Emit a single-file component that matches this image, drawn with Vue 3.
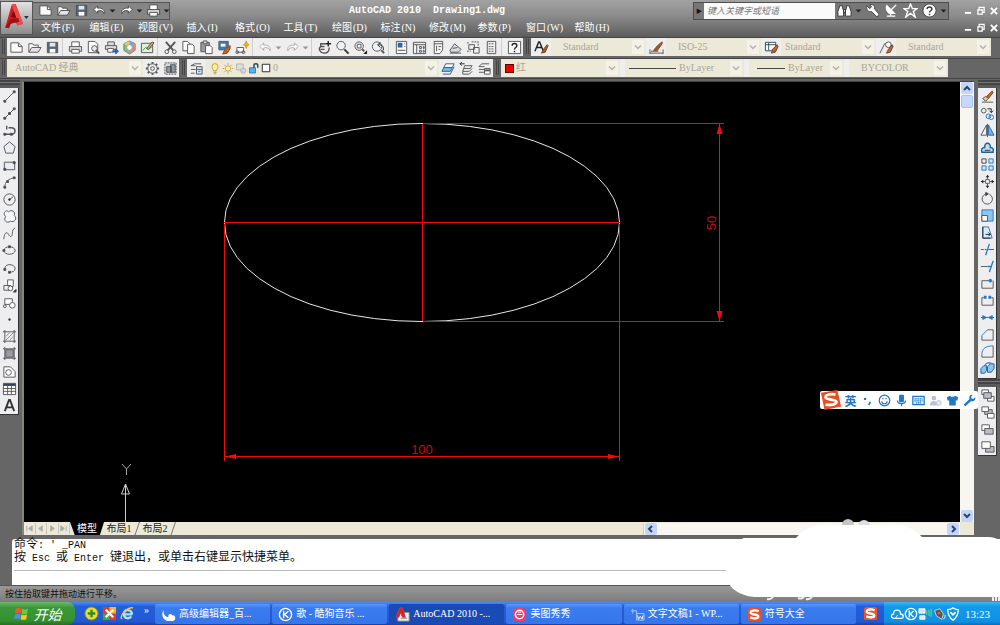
<script setup>
const icons = {
  new: '<path d="M2 3h8l4 4v6H2z" fill="#fafafa"/><path d="M10 3v4h4"/>',
  open: '<path d="M2 13V4h4l1 1.500h5V8" fill="#fff"/><path d="M2 13l3-5h10l-3 5z" fill="#e4e4ec"/>',
  save: '<path d="M2.500 2.500h11v11h-11z" fill="#5a6478"/><path d="M5 3h6v4H5z" fill="#dfe6f2" stroke="none"/><path d="M5 9.500h6v4H5z" fill="#fff" stroke="none"/>',
  print: '<path d="M4 7V2h8v5" fill="#fff"/><path d="M1.500 7h13v5h-13z" fill="#d8d8dc"/><path d="M4 10h8v4H4z" fill="#fff"/>',
  preview: '<path d="M2.500 1.500h7l3 3v9h-10z" fill="#fff"/><circle cx="9" cy="9" r="3" fill="#dfe9f5"/><path d="M11 11l3 3.500" stroke-width="2"/>',
  publish: '<path d="M4 6V2h7v4M1.500 6h12v4h-12z" fill="#ddd"/><path d="M4 9h6v4H4z" fill="#fff"/><path d="M9 12h5M12 9.500l2.500 2.500-2.500 2.500" stroke="#1765b8" stroke-width="2"/>',
  dwf: '<path d="M8 1l6 3v7l-6 4-6-4V4z" fill="#7cc478" stroke="#778"/><path d="M8 1l6 3-6 4z" fill="#6fa8e0" stroke="none"/><path d="M8 1v7L2 4z" fill="#ecca62" stroke="none"/><path d="M14 4v7l-6 4V8z" fill="#d98a76" stroke="none"/><circle cx="8" cy="8" r="3" fill="#fff" stroke="#99a"/>',
  sheet: '<path d="M1.500 3.500h12v10h-12z" fill="#dff0d8"/><path d="M3 11l3-3 3 2 4-3" stroke="#3d8f4a"/><path d="M7 9l6-7 2 1-6 7z" fill="#eba83a"/>',
  cut: '<path d="M3 2l8 9M13 2l-8 9" stroke-width="2"/><circle cx="4" cy="12.500" r="2"/><circle cx="12" cy="12.500" r="2"/>',
  copy: '<path d="M2 1.500h5l2 2v8H2z" fill="#fff"/><path d="M7 4.500h5l2 2v8H7z" fill="#fff"/>',
  paste: '<path d="M2 2.500h9v10H2z" fill="#999"/><path d="M4.500 1h4v3h-4z" fill="#ddd"/><path d="M7 6h5l2 2v6.500H7z" fill="#fff"/>',
  match: '<path d="M2 1.500h10v9H2z" fill="#4379b5"/><path d="M4 4h5v3H4z" fill="#fff" stroke="none"/><path d="M9 9l5-3v3l-3 5-5 1z" fill="#b8692c" stroke="#8a4718"/>',
  block: '<path d="M2 8h7v5H2z" fill="#fff"/><circle cx="2.500" cy="13" r="1.500"/><circle cx="9" cy="13" r="1.500"/><path d="M12 1l1 3 2 1-2 1-1 3-1-3-2-1 2-1z" fill="#f2b01e" stroke="#d8930c"/>',
  undo: '<path d="M6 3L2 7l4 4V8.500c4-1 6 0 7 3 1-4-2-6.500-7-6z" fill="#fff"/>',
  redo: '<path d="M10 3l4 4-4 4V8.500c-4-1-6 0-7 3-1-4 2-6.500 7-6z" fill="#fff"/>',
  arr: '<path d="M5 7h6l-3 3z" fill="currentColor" stroke="none"/>',
  pan: '<path d="M9 4H4v3h4M4 7c-3 2-1 7 4 7 4 0 5-3 5-6M4 10h4" stroke-width="1.500"/><path d="M12 1v6M9 4h6" stroke="#222" stroke-width="1.500"/>',
  zoom: '<circle cx="6.500" cy="6" r="4.500" fill="#eef3f8"/><path d="M10 10l4.500 4.500" stroke="#333" stroke-width="2"/>',
  zoomw: '<circle cx="6.500" cy="6.500" r="4.500" fill="#eef3f8"/><path d="M4.500 4.500h4v4h-4z"/><path d="M10 10l2 2" stroke-width="2"/><path d="M11 15h4v-4z" fill="#222" stroke="none"/>',
  zoomp: '<circle cx="6.500" cy="7" r="5" fill="#eef3f8"/><path d="M11 11l3 3" stroke-width="2"/><path d="M13 11c1-4-1-6-5-6M10 3L7 5l3 3" stroke="#222"/>',
  prop: '<path d="M2.500 1.500h11v13h-11z" fill="#f5f7fa"/><path d="M4 3h5v5H4z" fill="#2c66a8" stroke="none"/><path d="M4 11h8M11 4h1M11 7h1"/>',
  dc: '<path d="M1.500 2.500h13v12h-13z" fill="#eef2f6"/><path d="M1.500 5h13M5 5v9M8 7h2v2H8zM12 7h1v2h-1zM8 11h2v2H8zM12 11h1v2h-1z"/>',
  tp: '<path d="M4.500 1.500h9v9l-3 4h-6z" fill="#f7f7f7"/><path d="M4.500 4h9M7 6v6M9 7h3M9 10h2"/>',
  ssm: '<path d="M2 11l5-7 7 6-3 3H3z" fill="#d6dbe2"/><path d="M5 9l5-1M2 14h12"/>',
  markup: '<path d="M3 5h6v5H3zM8 8h6v6H8z" fill="#eee"/><path d="M1 3h3M6 2h7v4M1 12h4" stroke-dasharray="2 1"/>',
  calc: '<path d="M3.500 1.500h9v13h-9z" fill="#f2f2f2"/><path d="M5 4h6M5 7h6M5 9.500h6M5 12h6" stroke-dasharray="2 1"/>',
  help: '<path d="M1.500 1.500h13v13h-13z" fill="#f5f7fa"/><path d="M5.500 6c0-3 5-3 5 0 0 2-2.500 2-2.500 4M8 11.500v1.500" stroke="#222" stroke-width="1.500"/>',
  astyle: '<path d="M1 12L5 2h1l4 10M3 8h6" stroke="#222" stroke-width="1.500"/><path d="M14 5l-4 5-2 4 4-1 3-7z" fill="#a85c2e" stroke="#7d3e18"/>',
  dstyle: '<path d="M1 14h14M1 10v5M15 10v5M2 12h8"/><path d="M14 2L9 6l-4 5h4l5-7z" fill="#a85c2e" stroke="#7d3e18"/>',
  tstyle: '<path d="M1.500 2.500h11v9h-11zM1.500 5h11M5 3v8" fill="#fff" stroke="#345"/><path d="M14 5l-5 5-1 4 4-1 3-6z" fill="#b8692c" stroke="#7d3e18"/>',
  mstyle: '<path d="M1 14l5-10h4"/><circle cx="10" cy="5" r="3" fill="#fff"/><path d="M14 5l-4 5-2 4 4-1 3-6z" fill="#b8692c" stroke="#7d3e18"/>',
  gear: '<circle cx="8" cy="8" r="5"/><circle cx="8" cy="8" r="2"/><path d="M8 1v2M8 13v2M1 8h2M13 8h2M3 3l1.500 1.500M11.500 11.500L13 13M13 3l-1.500 1.500M4.500 11.500L3 13" stroke-width="2"/>',
  ws: '<path d="M2 2h12v12H2z" stroke-dasharray="2 1" fill="#d5dae2"/><path d="M4 6h5v6H4zM8 4h5v8H8z" fill="#8e98a8"/>',
  layers: '<path d="M2 5l4-2h7M2 9h5M2 13h4M2 5h5" /><path d="M8 6h6v8H8z" fill="#cfe0f0"/><path d="M8 9h6M10 11h2" stroke="#2a6fb5"/>',
  bulb: '<path d="M6 11c0-2-2-3-2-5.500a4 4 0 018 0C12 8 10 9 10 11z" fill="#fff0a0" stroke="#a8892a"/><path d="M6 13h4M7 15h2"/>',
  sun: '<circle cx="8" cy="8" r="3.500" fill="#fff2a0" stroke="#b8902a"/><path d="M8 1v2M8 13v2M1 8h2M13 8h2M3 3l1.500 1.500M11.500 11.500L13 13M13 3l-1.500 1.500M4.500 11.500L3 13" stroke="#a8892a"/>',
  vp: '<path d="M2 2h9v8H2z" fill="#ddd" stroke="#aaa"/><circle cx="11" cy="11" r="3.500" fill="#cdd5dd" stroke="#aaa"/>',
  lock: '<path d="M2 7h8v7H2z" fill="#58b4e8" stroke="#1f6ea8"/><path d="M8 7V4c0-3 5-3 5 0v3" stroke="#2b4a66" stroke-width="2"/>',
  sq: '<path d="M2 2h12v12H2z" fill="#fff" stroke="#222" stroke-width="1.500"/>',
  lcur: '<path d="M5 3h9l-2 4H3z" fill="#fff" stroke="#235f96"/><path d="M3 7h9l-2 4H1z" fill="#7fb9e6" stroke="#235f96"/><path d="M2 14h8l4-8" stroke="#235f96"/>',
  lprev: '<path d="M6 5h8l-2 3H5zM5 8l-1 3h7l3-3M4 11v3h7l3-3"/><path d="M1 3h5M3 1L1 3l2 2" stroke="#222"/>',
  lstate: '<path d="M2 6l3-3h8M2 9h6M2 12h6M2 6h6"/><path d="M8 8h6v6H8z" fill="#fff"/><path d="M8 10h6" stroke-width="2"/>',
  line: '<path d="M3 13L13 3"/><path d="M2 12h2v2H2zM12 2h2v2h-2z" fill="#333"/>',
  xline: '<path d="M2 14L14 2"/><path d="M2 12h2v2H2zM7 7h2v2H7zM12 2h2v2h-2z" fill="#222"/>',
  pline: '<path d="M2 12h9c4-1 4-7-1-7H7M2 12h7M5 3v4" stroke-width="1.500"/><path d="M2 11h2v2H2zM9 11h2v2H9z" fill="#333"/>',
  poly: '<path d="M8 2l6 5-2 7H4L2 7z" fill="#e8edf4"/>',
  rect: '<path d="M2.500 4.500h11v8h-11z" fill="#e8edf4"/><path d="M2 11h2v2H2zM12 4h2v2h-2z" fill="#222"/>',
  arc: '<path d="M3 13c0-6 4-9 10-10"/><path d="M2 12h2v2H2zM5 6h2v2H5zM12 2h2v2h-2z" fill="#333"/>',
  circle: '<circle cx="8" cy="8" r="6"/><path d="M8 8l4-3"/><circle cx="8" cy="8" r="1" fill="#222"/>',
  cloud: '<path d="M4 8C0 5 4 0 7 3c3-3 8 0 6 4 4 3 0 8-4 6-4 3-8-1-5-5z" fill="#f4f6f9"/>',
  spline: '<path d="M2 14c0-6 3-9 5-5s4 2 4-1 1-5 3-6" />',
  ellipse: '<ellipse cx="8" cy="8" rx="6" ry="4"/><path d="M7 3h2v2H7zM1 7h2v2H1z" fill="#333"/>',
  earc: '<path d="M3 8c0-6 11-5 11 0 0 3-3 4-6 4"/><path d="M2 8h2v2H2zM7 11h2v2H7z" fill="#333"/>',
  insert: '<path d="M6 2h6v7H6z" fill="#fff"/><path d="M2 8h7v5H2z" fill="#eee"/><circle cx="9" cy="11" r="2.500" fill="#fff"/><path d="M12 15h3v-3z" fill="#111"/>',
  mkblock: '<path d="M3 4h8v6H3z" fill="#fff"/><circle cx="11" cy="11" r="3" fill="#fff"/><circle cx="3" cy="12" r="1.500"/>',
  point: '<circle cx="8" cy="8" r="1" fill="#444"/>',
  hatch: '<path d="M3 1v14M13 1v14M1 3h14M1 13h14"/><path d="M4 8l4-4M4 12l8-8M8 12l4-4" stroke="#888"/>',
  grad: '<path d="M4 4h8v8H4z" fill="#9a9aa2"/><path d="M3 1v14M13 1v14M1 3h14M1 13h14"/>',
  region: '<path d="M2 14V3h7l5 5v6z" fill="#fff"/><circle cx="7" cy="9" r="3"/>',
  table: '<path d="M1.500 2.500h13v12h-13z" fill="#fff"/><path d="M1.500 4h13" stroke="#345" stroke-width="2.500"/><path d="M1.500 8h13M1.500 11h13M6 4v10M10 4v10"/>',
  text: '<path d="M3 14L7.500 2h1L13 14M4.500 10h7" stroke="#333" stroke-width="2"/>',
  erase: '<path d="M3 10l3 3M2 14h12"/><path d="M3 10l3 3 3-3-3-2z" fill="#f2c9a0"/><path d="M7 8l6-6 1 2-5 6z" fill="#b06a34" stroke="#8a4718"/>',
  cp: '<circle cx="4" cy="5" r="2.500"/><path d="M8 3h4v4M10 5l2 2 2-2" stroke="#222"/><circle cx="9" cy="11" r="2.500" stroke="#2878c8" fill="#d3e8fa"/><circle cx="12" cy="12" r="2.500" stroke="#2878c8"/>',
  mirror: '<path d="M7 2v11H1z" fill="#eee"/><path d="M9 2v11h6z" fill="#6cb2e8" stroke="#2a6fb5"/><path d="M8 1v14"/>',
  offset: '<path d="M2 13h12c1-4-1-5-3-5 1-6-7-6-6 0-3 0-4 2-3 5z" fill="#bcdcf5" stroke="#235f96" stroke-width="1.500"/><path d="M5 11h6" stroke="#333"/>',
  array: '<path d="M2 2h4.500v4.500H2z" stroke="#444"/><path d="M9.500 2H14v4.500H9.500zM2 9.500h4.500V14H2zM9.500 9.500H14V14H9.500z" fill="#cfe5f8" stroke="#2878c8"/>',
  move: '<path d="M8 1v14M1 8h14" stroke-dasharray="5 1 2 1"/><path d="M6 3.500h4L8 1zM6 12.500h4L8 15zM3.500 6v4L1 8zM12.500 6v4L15 8z" fill="#222" stroke="none"/><path d="M6 6h4v4H6z" fill="#fff"/>',
  rotate: '<path d="M10 3.500A5.500 5.500 0 115.500 3.500"/><path d="M6 1.500l3 1.500-3 2z" fill="#222"/>',
  scale: '<path d="M2 2h12v12H2z" fill="#8cc6f0" stroke="#2878c8"/><path d="M2 8h6v6H2z" fill="#fff"/>',
  stretch: '<path d="M3 2h6l4 12H3z" fill="#d8ebfa" stroke="#2878c8"/><path d="M3 2v12h8M6 10h5M9 8l2 2-2 2" stroke="#222"/>',
  trim: '<path d="M1 8h3M5 8h2M9 8h6"/><path d="M6 14l4-12" stroke="#2878c8" stroke-width="1.500"/>',
  extend: '<path d="M1 8h7"/><path d="M8 8h4M10 14l4-12" stroke="#2878c8" stroke-width="1.500"/>',
  break1: '<path d="M14 5v8H2V5h8"/><circle cx="11" cy="5" r="1.500" fill="#2878c8" stroke="#2878c8"/>',
  break2: '<path d="M4 5H2v8h12V5h-2"/><path d="M4 3h3v3H4zM9 3h3v3H9z" fill="#2878c8" stroke="none"/>',
  join: '<path d="M1 8h14"/><path d="M3 6l4 2-4 2zM13 6L9 8l4 2z" fill="#2878c8" stroke="#2878c8"/>',
  chamfer: '<path d="M2 14h12V3M2 14V9"/><path d="M2 9l6-6" stroke="#2878c8"/><path d="M8 3h6"/>',
  fillet: '<path d="M2 14h12V2M2 14v-3"/><path d="M2 11c0-6 4-9 12-9" stroke="#2878c8"/>',
  explode: '<path d="M1 8l3-3h3v5l-2 3H1zM8 6l3-3h4v5l-3 4H8zM5 4l3-2h4" fill="#8cc6f0" stroke="#235f96"/>',
  d1: '<path d="M2 2h7v5H2z" fill="#fff"/><path d="M8 9h7v5H8z" fill="#fff"/><path d="M4 5h8v6H4z" fill="#b9bdca"/>',
  d2: '<path d="M5 5h8v5H5z" fill="#b9bdca"/><path d="M2 2h7v5H2zM8 9h7v5H8z" fill="#fff"/>',
  d3: '<path d="M2 3h8v6H2z" fill="#fff"/><path d="M5 7h9v6H5z" fill="#b9bdca"/>',
  d4: '<path d="M6 8h9v6H6z" fill="#b9bdca"/><path d="M2 3h9v7H2z" fill="#fff"/>',
  bino: '<path d="M3 3h3v3l1 2v6H1V9zM10 3h3l2 6v5H9V8l1-2zM7 7h2v3H7z" fill="#fff" stroke="#333"/>',
  wrench: '<path d="M2 3l3 3 2-2-2-2c4-1 6 1 5 4l5 6-2 3-6-6c-3 1-6-1-5-6z" fill="#fff" stroke="#444"/>',
  dish: '<path d="M3 3l8 8H6C3 9 2 6 3 3zM8 7l5-5M7 11v3M3 14h9" fill="#fff" stroke="#fff" stroke-width="1.500"/>',
  star: '<path d="M8 1l2 5h5l-4 3 2 6-5-4-5 4 2-6-4-3h5z" fill="#777" stroke="#fff" stroke-width="1.500"/>',
  qm: '<circle cx="8" cy="8" r="7" fill="#fff" stroke="#444"/><path d="M5.500 6.500c0-3 5-3 5 0 0 2-2.500 1.500-2.500 3.500M8 11.500v1.500" stroke="#333" stroke-width="1.500"/>',
  min: '<path d="M3 11h10" stroke="#fff" stroke-width="3"/>',
  max: '<path d="M5 5V2h8v8h-3M3 6h7v7H3z" stroke="#fff" stroke-width="2"/>',
  x: '<path d="M3 3l10 10M13 3L3 13" stroke="#fff" stroke-width="3"/>',
  chev: '<path d="M4 6l4 4 4-4" stroke="#b4b2a4" stroke-width="2"/>',
  smile: '<circle cx="8" cy="8" r="6.500" stroke="#1f77c8" stroke-width="1.500"/><path d="M4.500 9c1 4 6 4 7 0M6 5v1.500M10 5v1.500" stroke="#1f77c8" stroke-width="1.500"/>',
  mic: '<path d="M6 2h4v7H6z" fill="#1f77c8" stroke="#1f77c8" stroke-width="2" stroke-linejoin="round"/><path d="M3 8c0 5 10 5 10 0M8 12v3" stroke="#1f77c8" stroke-width="1.500"/>',
  kb: '<path d="M1 3h14v10H1z" stroke="#1f77c8" stroke-width="1.500" fill="#d8eafa"/><path d="M3 6h10M3 8.500h10M5 11h6" stroke="#1f77c8" stroke-width="1.500" stroke-dasharray="1.500 .8"/>',
  person: '<circle cx="6" cy="5" r="3" fill="#bcbfd6" stroke="none"/><path d="M1 14c0-7 10-7 10 0z" fill="#bcbfd6" stroke="none"/><circle cx="12" cy="11" r="3" fill="#e6e7f2" stroke="#bcbfd6"/>',
  shirt: '<path d="M1 4l4-2c1 2 5 2 6 0l4 2-1 4h-2v6H4V8H2z" fill="#1f77c8" stroke="none"/>',
  wr2: '<path d="M1 13l7-7c-1-3 1-6 4-5L10 3.500l.5 2 2 .5L15 4c1 3-2 6-5 4.500L3 15z" fill="#1f77c8" stroke="none"/>',
  comma: '<circle cx="5" cy="6" r="1.500" fill="#1f77c8" stroke="none"/><path d="M11 9.500v1.500l-1.500 2.500" stroke="#1f77c8" stroke-width="2"/>',
  sogou: '<rect x="1" y="1" width="14" height="14" rx="2" fill="#ee4f23" stroke="none"/><path d="M12.500 4.500C9 3 4 3.500 4 6s8 1.500 8 4-5 2.500-8.500 1" stroke="#fff" stroke-width="2.500"/>',
  winflag: '<path d="M2 3c2-1 4-1 6 0L7 8c-2-1-4-1-6 0z" fill="#ee5a2b" stroke="none"/><path d="M9 3c2 1 4 1 6 0l-1 5c-2 1-4 1-6 0z" fill="#7ac143" stroke="none"/><path d="M1 9c2-1 4-1 6 0l-1 5c-2-1-4-1-6 0z" fill="#4a8ff0" stroke="none"/><path d="M8 9c2 1 4 1 6 0l-1 5c-2 1-4 1-6 0z" fill="#fcc827" stroke="none"/>',
  q360: '<circle cx="8" cy="8" r="7" fill="#f5d923" stroke="#5b9c22"/><path d="M8 4v8M4 8h8" stroke="#2f8a2a" stroke-width="2.500"/>',
  qpic: '<path d="M1 1h14v14H1z" fill="#e33b2a" stroke="none"/><path d="M1 8h7v7H1z" fill="#3fa845" stroke="none"/><path d="M8 1h7v7H8z" fill="#f3b52c" stroke="none"/><path d="M4 4l8 8M12 4l-8 8" stroke="#fff" stroke-width="2.500"/>',
  ie: '<path d="M13 9H4c1 5 6 5 8 2M4 8c1-5 8-5 9 1" stroke="#a9e0ff" stroke-width="2.500"/><path d="M2 14C-1 10 8 1 14 2" stroke="#f3c640" stroke-width="1.500"/>',
  cld: '<path d="M3 3c-4 6 0 12 6 12h4c4-2 2-7-1-6-2-3-5-1-4 2-3 0-6-3-5-8z" fill="#fff" stroke="none"/>',
  kugou: '<circle cx="8" cy="8" r="6.500" stroke="#fff" stroke-width="1.500"/><path d="M6 4v8M11 4.500L7 8l4 3.500" stroke="#fff" stroke-width="1.500"/>',
  cad: '<path d="M3 6h12v9H3z" fill="#eee" stroke="#999"/><path d="M1 11L5 1h3l3 10H8L6 6l-2 5z" fill="#d62020" stroke="#c04040"/><path d="M6 12h7" stroke="#888"/>',
  meitu: '<rect x="1" y="1" width="14" height="14" rx="4" fill="#f0386b" stroke="none"/><circle cx="8" cy="8" r="4.500" stroke="#fff" stroke-width="1.500"/><path d="M5 8h6M6 5.500h4" stroke="#fff"/>',
  wps: '<path d="M1 4h6v4M3 2v5M7 7h8v7H7z" stroke="#a9c9ff"/><path d="M8 9l1 4 2-3 2 3 1-4" stroke="#fff"/>',
  tcloud: '<path d="M4 13C0 12 2 8 4 8c0-6 8-6 8 0 4 0 4 5 1 5z" stroke="#fff" stroke-width="1.500"/><path d="M6 13l3-4" stroke="#fff"/>',
  net: '<path d="M1 2h7v5H1zM2 10h6v4H2z" fill="#d9e6f2" stroke="#fff"/><path d="M10 4v5M12.500 3v7M15 2v9" stroke="#6cf06c"/>',
  spk: '<path d="M3 4l6-2 4 6-2 6-6-4z" fill="#555" stroke="#ddd"/><circle cx="8" cy="7" r="2" fill="#d86a4a"/><path d="M13 14c2-2 2-3 2-5" stroke="#fff"/>',
  shield: '<path d="M2 3c4 0 4-1 6-2 2 1 2 2 6 2 0 6-2 9-6 12-4-3-6-6-6-12z" stroke="#fff" stroke-width="1.500"/><path d="M5 6l3 3 3-3" stroke="#fff" stroke-width="2"/>'
}

const segments = 52
const outline = Array.from({ length: segments }, (_, i) => {
  const a = (i / segments) * Math.PI * 2
  return `${(422 + 197.5 * Math.cos(a)).toFixed(1)},${(222.5 + 99 * Math.sin(a)).toFixed(1)}`
}).join(' ')

const quick = ['new', 'open', 'save', 'undo', 'arr', 'redo', 'arr', 'print', 'arr']
const menus = [['文件', 'F'], ['编辑', 'E'], ['视图', 'V'], ['插入', 'I'], ['格式', 'O'], ['工具', 'T'], ['绘图', 'D'], ['标注', 'N'], ['修改', 'M'], ['参数', 'P'], ['窗口', 'W'], ['帮助', 'H']]
const standard = [
  ['new', 'open', 'save'],
  ['print', 'preview', 'publish', 'dwf', 'sheet'],
  ['cut', 'copy', 'paste', 'match', 'block'],
  ['undo', 'arr', 'redo', 'arr'],
  ['pan', 'zoom', 'zoomw', 'zoomp'],
  ['prop', 'dc', 'tp', 'ssm', 'markup', 'calc'],
  ['help']
]
const styles = [
  { icon: 'astyle', value: 'Standard', label: '文字样式', pad: true },
  { icon: 'dstyle', value: 'ISO-25', label: '标注样式', pad: true },
  { icon: 'tstyle', value: 'Standard', label: '表格样式', pad: false },
  { icon: 'mstyle', value: 'Standard', label: '多重引线样式', pad: true }
]
const draw = ['line', 'xline', 'pline', 'poly', 'rect', 'arc', 'circle', 'cloud', 'spline', 'ellipse', 'earc', 'insert', 'mkblock', 'point', 'hatch', 'grad', 'region', 'table', 'text']
const modify = ['erase', 'cp', 'mirror', 'offset', 'array', 'move', 'rotate', 'scale', 'stretch', 'trim', 'extend', 'break1', 'break2', 'join', 'chamfer', 'fillet', 'explode']
const order = ['d1', 'd2', 'd3', 'd4']
const ime = ['comma', 'smile', 'mic', 'kb', 'person', 'shirt', 'wr2']
const tasks = [
  { icon: 'cld', text: '高级编辑器_百...' },
  { icon: 'kugou', text: '歌 - 酷狗音乐 ...' },
  { icon: 'cad', text: 'AutoCAD 2010 -...', on: true },
  { icon: 'meitu', text: '美图秀秀' },
  { icon: 'wps', text: '文字文稿1 - WP...' },
  { icon: 'sogou', text: '符号大全' }
]
</script>

<template>
  <div class="app">
    <header class="head">
      <button class="logo" aria-label="应用程序菜单">
        <svg viewBox="0 0 32 34">
          <path d="M4 27L11 3l4-1 8 21-6 2-2-4-6 1-1 5z" fill="#d31820" />
          <path d="M11 3l4-1 8 21-6 2z" fill="#f04a48" />
          <path d="M10 16l3-7 3 8z" fill="#7d0c12" />
          <path d="M4 27l6-9 8-1 1 4-9 2-2 5z" fill="#9e1118" />
          <path d="M24 15h5l-2.500 3z" fill="#234" />
        </svg>
      </button>
      <div class="headmain">
        <div class="titlerow">
          <div class="quick">
            <button v-for="(n, i) in quick" :key="i" :class="{ small: n === 'arr' }" :aria-label="n">
              <svg class="ic" viewBox="0 0 16 16" v-html="icons[n]"></svg>
            </button>
          </div>
          <h1>AutoCAD 2010&nbsp; Drawing1.dwg</h1>
          <div class="search">
            <span class="tri">▶</span>
            <input type="text" placeholder="键入关键字或短语" aria-label="搜索">
            <button v-for="(n, i) in ['bino', 'arr', 'wrench', 'dish', 'star', 'qm', 'arr']" :key="i" :class="{ small: n === 'arr' }" :aria-label="n">
              <svg class="ic" viewBox="0 0 16 16" v-html="icons[n]"></svg>
            </button>
          </div>
          <div class="winbtns">
            <button v-for="n in ['min', 'max', 'x']" :key="n" :aria-label="n"><svg class="ic" viewBox="0 0 16 16" v-html="icons[n]"></svg></button>
          </div>
        </div>
        <div class="menurow">
          <nav class="menus">
            <button v-for="m in menus" :key="m[1]">{{ m[0] }}<span>({{ m[1] }})</span></button>
          </nav>
          <div class="winbtns">
            <button v-for="n in ['min', 'max', 'x']" :key="n" :aria-label="n"><svg class="ic" viewBox="0 0 16 16" v-html="icons[n]"></svg></button>
          </div>
        </div>
      </div>
    </header>

    <div class="toolrow">
      <i class="grip"></i>
      <div class="bar">
        <div v-for="(g, i) in standard" :key="i" class="group">
          <button v-for="(n, j) in g" :key="j" :class="{ small: n === 'arr', dim: i === 3 }" :aria-label="n">
            <svg class="ic" viewBox="0 0 16 16" v-html="icons[n]"></svg>
          </button>
        </div>
      </div>
      <i class="grip"></i>
      <div class="bar stylebar">
        <div v-for="(s, i) in styles" :key="i" class="styleitem">
          <button :aria-label="s.label"><svg class="ic" viewBox="0 0 16 16" v-html="icons[s.icon]"></svg></button>
          <div class="combo" :class="{ pad: s.pad }">
            <select :aria-label="s.label"><option>{{ s.value }}</option></select>
            <svg class="chev" viewBox="0 0 16 16" v-html="icons.chev"></svg>
          </div>
        </div>
      </div>
    </div>

    <div class="toolrow">
      <i class="grip"></i>
      <div class="bar workbar">
        <div class="combo near">
          <select aria-label="工作空间"><option>AutoCAD 经典</option></select>
          <svg class="chev" viewBox="0 0 16 16" v-html="icons.chev"></svg>
        </div>
        <button aria-label="工作空间设置"><svg class="ic" viewBox="0 0 16 16" v-html="icons.gear"></svg></button>
        <button aria-label="我的工作空间"><svg class="ic" viewBox="0 0 16 16" v-html="icons.ws"></svg></button>
      </div>
      <i class="grip"></i>
      <div class="bar layerbar">
        <button aria-label="图层特性"><svg class="ic" viewBox="0 0 16 16" v-html="icons.layers"></svg></button>
        <div class="combo">
          <svg v-for="n in ['bulb', 'sun', 'vp', 'lock']" :key="n" class="lead" viewBox="0 0 16 16" v-html="icons[n]"></svg>
          <svg class="lead sq" viewBox="0 0 16 16" v-html="icons.sq"></svg>
          <select aria-label="图层"><option>0</option></select>
          <svg class="chev" viewBox="0 0 16 16" v-html="icons.chev"></svg>
        </div>
        <button v-for="n in ['lcur', 'lprev', 'lstate']" :key="n" :aria-label="n"><svg class="ic" viewBox="0 0 16 16" v-html="icons[n]"></svg></button>
      </div>
      <i class="grip"></i>
      <div class="bar propbar">
        <div class="combo wide">
          <i class="swatch"></i>
          <select aria-label="颜色"><option>红</option></select>
          <svg class="chev" viewBox="0 0 16 16" v-html="icons.chev"></svg>
        </div>
        <div class="combo wide">
          <i class="rule long"></i>
          <select aria-label="线型"><option>ByLayer</option></select>
          <svg class="chev" viewBox="0 0 16 16" v-html="icons.chev"></svg>
        </div>
        <div class="combo near">
          <i class="rule"></i>
          <select aria-label="线宽"><option>ByLayer</option></select>
          <svg class="chev" viewBox="0 0 16 16" v-html="icons.chev"></svg>
        </div>
        <div class="combo pad">
          <select aria-label="打印样式"><option>BYCOLOR</option></select>
          <svg class="chev" viewBox="0 0 16 16" v-html="icons.chev"></svg>
        </div>
      </div>
    </div>

    <main class="work">
      <aside class="side left">
        <i class="cap"></i>
        <div class="tools spread">
          <button v-for="n in draw" :key="n" :aria-label="n"><svg class="ic" viewBox="0 0 16 16" v-html="icons[n]"></svg></button>
        </div>
      </aside>

      <section class="view">
        <svg class="canvas">
          <g transform="translate(-24 -82)" fill="none">
            <polygon :points="outline" stroke="#e8e8e8" />
            <g fill="#f00c0c">
              <rect x="224" y="222" width="396" height="1" />
              <rect x="422" y="124" width="1" height="197" />
              <rect x="423" y="123" width="301" height="1" />
              <rect x="423" y="321" width="301" height="1" />
              <rect x="719" y="124" width="1" height="197" />
              <rect x="224" y="224" width="1" height="237" />
              <rect x="619" y="224" width="1" height="237" />
              <rect x="225" y="456" width="395" height="1" />
              <path d="M225 456.500l11-2.500v5zM619 456.500l-11-2.500v5zM719.500 124l-3 10h6zM719.500 321l-3-10h6z" />
            </g>
            <text x="422" y="454" text-anchor="middle" class="measure">100</text>
            <text transform="translate(716 223) rotate(-90)" text-anchor="middle" class="measure">50</text>
            <path d="M122 464l4.500 5 4.500-5M126.500 469v6" stroke="#aaa" />
            <path d="M125.500 484l-4 10h8zM125.500 484v38" stroke="#ccc" />
          </g>
        </svg>
        <div class="vscroll">
          <button aria-label="向上"><svg viewBox="0 0 12 12"><path d="M3 8l3-3 3 3" /></svg></button>
          <i class="thumb"></i>
          <span></span>
          <button aria-label="向下"><svg viewBox="0 0 12 12"><path d="M3 4l3 3 3-3" /></svg></button>
        </div>
        <div class="tabs">
          <div class="nav">
            <button aria-label="第一个"><svg viewBox="0 0 10 10"><path d="M2 2v6M8 2L4 5l4 3z" /></svg></button>
            <button aria-label="上一个"><svg viewBox="0 0 10 10"><path d="M7 2L3 5l4 3z" /></svg></button>
            <button aria-label="下一个"><svg viewBox="0 0 10 10"><path d="M3 2l4 3-4 3z" /></svg></button>
            <button aria-label="最后一个"><svg viewBox="0 0 10 10"><path d="M8 2v6M2 2l4 3-4 3z" /></svg></button>
          </div>
          <button class="tab on">模型</button>
          <button class="tab">布局1</button>
          <svg class="slash" viewBox="0 0 6 13"><path d="M5.500 0L1 13" /></svg>
          <button class="tab">布局2</button>
          <svg class="slash" viewBox="0 0 6 13"><path d="M5.500 0L1 13" /></svg>
          <div class="hscroll">
            <button aria-label="向左"><svg viewBox="0 0 12 12"><path d="M7 3L4 6l3 3" /></svg></button>
            <span></span>
            <button aria-label="向右"><svg viewBox="0 0 12 12"><path d="M5 3l3 3-3 3" /></svg></button>
          </div>
        </div>
        <i class="corner"></i>
      </section>

      <aside class="side right">
        <i class="cap"></i>
        <div class="tools">
          <button v-for="n in modify" :key="n" :aria-label="n"><svg class="ic" viewBox="0 0 16 16" v-html="icons[n]"></svg></button>
        </div>
        <i class="cap"></i>
        <div class="tools">
          <button v-for="n in order" :key="n" :aria-label="n"><svg class="ic" viewBox="0 0 16 16" v-html="icons[n]"></svg></button>
        </div>
      </aside>
    </main>

    <section class="command">
      <div class="log">
        <p>命令<span>: ' _PAN</span></p>
        <p>按<span> Esc </span>或<span> Enter </span>键退出，或单击右键显示快捷菜单。</p>
      </div>
      <input type="text" aria-label="命令行">
    </section>

    <div class="status">按住拾取键并拖动进行平移。</div>

    <footer class="taskbar">
      <button class="start"><svg viewBox="0 0 16 16" v-html="icons.winflag"></svg>开始</button>
      <div class="launch">
        <button v-for="n in ['q360', 'qpic', 'ie']" :key="n" :aria-label="n"><svg class="ic" viewBox="0 0 16 16" v-html="icons[n]"></svg></button>
        <span>»</span>
      </div>
      <div class="tasks">
        <button v-for="t in tasks" :key="t.text" :class="{ on: t.on }">
          <svg class="ic" viewBox="0 0 16 16" v-html="icons[t.icon]"></svg>{{ t.text }}
        </button>
      </div>
      <button class="lang" aria-label="输入法"><svg class="ic" viewBox="0 0 16 16" v-html="icons.sogou"></svg></button>
      <div class="tray">
        <svg v-for="n in ['tcloud', 'kugou', 'net', 'spk', 'shield']" :key="n" class="ic" viewBox="0 0 16 16" v-html="icons[n]"></svg>
        <time>13:23</time>
      </div>
    </footer>

    <svg class="blob" viewBox="0 0 274 82" width="274" height="82">
      <circle cx="122" cy="6" r="6" fill="#c4c4c4" />
      <circle cx="138" cy="7" r="6" fill="#dedede" />
      <path d="M0 55C0 38 4 24 18 19H70C76 12 84 6 96 6H170C182 6 190 12 196 18H262Q270 18 274 22V78H28C10 76 0 66 0 55z" fill="#fff" />
      <path d="M41 80q5 1 7-4M72 79q5 2 7-3M80 80q5 1 7-4M267 77v5M270 78v4M273 78v4" fill="none" stroke="#eee" stroke-width="2" />
    </svg>

    <div class="ime">
      <svg class="imelogo" viewBox="0 0 24 24">
        <path d="M1 4l18-3 4 18-18 4z" fill="#e84e1f" />
        <path d="M17 6C12 5 6 6 6 9s12 2 12 5-7 4-12 3" fill="none" stroke="#fff" stroke-width="3" />
      </svg>
      <button class="en">英</button>
      <button v-for="n in ime" :key="n" :aria-label="n"><svg class="ic" viewBox="0 0 16 16" v-html="icons[n]"></svg></button>
    </div>
  </div>
</template>

<style>
html, body { background: #666; }
</style>

<style scoped>
.app {
  position: relative;
  display: flex;
  flex-direction: column;
  min-height: 100vh;
  overflow: hidden;
  background: #666;
  font-family: "Liberation Serif", "Noto Sans CJK SC", serif;
  font-size: 10px;
  line-height: 14px;
}
button { padding: 0; border: 0; background: none; font: inherit; color: inherit; display: flex; align-items: center; justify-content: center; flex: none; }
input, select { border: 0; padding: 0; margin: 0; background: none; font: inherit; min-width: 0; outline: 0; border-radius: 0; }
select { appearance: none; color: #aaa694; flex: 1; height: 16px; }
p, h1 { margin: 0; }
.ic { width: 15px; height: 15px; fill: none; stroke: #555; flex: none; }

.head { display: flex; height: 37px; background: linear-gradient(#a2a2a2, #8a8a8a 45%, #5c5c5c); color: #fff; }
.logo { width: 31px; height: 32px; margin: 2px 0 0 1px; background: linear-gradient(#e2e2e2, #8c8c8c); box-shadow: 0 0 0 1px #555; }
.logo svg { width: 31px; height: 32px; }
.headmain { flex: 1; display: flex; flex-direction: column; min-width: 0; }
.titlerow { display: flex; align-items: center; height: 20px; padding-top: 1px; box-sizing: border-box; }
.quick { display: flex; align-items: center; height: 18px; width: 138px; padding-left: 3px; box-sizing: border-box; background: #858585; border: 1px solid #555; flex: none; }
.quick button { width: 18px; }
.quick button.small, .search button.small { width: 9px; color: #222; }
.quick .ic { stroke: #4c4c4c; }
h1 { flex: 1; padding-left: 179px; font: bold 10px/18px "Liberation Mono", monospace; white-space: nowrap; }
.search { display: flex; align-items: center; height: 18px; width: 256px; background: #777; border: 1px solid #4e4e4e; box-sizing: border-box; flex: none; }
.search .tri { width: 10px; color: #111; font-size: 6px; text-align: center; }
.search input { flex: 1; height: 16px; padding-left: 3px; background: #fafafa; font-style: italic; font-size: 9px; }
.search input::placeholder { color: #777; opacity: 1; }
.search button { width: 19px; }
.winbtns { display: flex; gap: 3px; width: 37px; flex: none; margin-left: 14px; }
.winbtns .ic { width: 10px; height: 10px; }
.menurow { display: flex; align-items: center; justify-content: space-between; height: 16px; }
.menus { display: flex; width: 582px; padding-left: 9px; }
.menus button { flex: 1; justify-content: flex-start; white-space: nowrap; }
.menus span { padding-left: 1px; }

.toolrow { display: flex; align-items: flex-start; height: 21px; border-top: 1px solid #444; box-sizing: border-box; }
.toolrow + .toolrow { height: 20px; }
.grip { flex: none; width: 1px; height: 15px; margin: 1px 2px; border-left: 1px solid #444; border-right: 1px solid #444; }
.bar + .grip { margin-left: 3px; }
.bar { display: flex; align-items: center; height: 18px; background: #eeeeee; flex: none; }
.bar button { width: 18px; height: 18px; }
.bar button.small { width: 9px; color: #999; }
.dim .ic { stroke: #aaa; }
.group { display: flex; }
.group + .group { margin-left: 1px; padding-left: 3px; border-left: 1px solid #cfcfcf; }
.stylebar { flex: 1; margin-right: 9px; }
.styleitem { display: flex; flex: 1; align-items: center; }
.styleitem button { width: 20px; }
.combo { display: flex; align-items: center; height: 18px; flex: 1; min-width: 0; padding-left: 4px; box-sizing: border-box; background: #ece9d8; }
.combo.pad { padding-left: 12px; }
.combo.near { padding-left: 8px; }
.chev { width: 12px; height: 14px; margin-right: 2px; background: #f3f1e8; fill: none; flex: none; }
.workbar { width: 172px; }
.layerbar { width: 306px; }
.lead { width: 12px; height: 13px; margin-right: 1px; fill: none; stroke: #777; flex: none; }
.sq { width: 10px; height: 10px; margin-right: 2px; }
.propbar { width: 447px; gap: 5px; }
.propbar .wide { flex: 0 0 119px; }
.swatch { width: 7px; height: 7px; background: #f00000; border: 1px solid #600; margin-right: 2px; flex: none; }
.rule { width: 28px; height: 1px; background: #4a4838; margin-right: 3px; flex: none; }
.rule.long { width: 47px; }

.work { display: flex; flex: 1; padding-top: 1px; border-top: 1px solid #444; min-height: 440px; }
.side { width: 20px; flex: none; display: flex; flex-direction: column; }
.cap { height: 8px; flex: none; background: linear-gradient(#444 0 2px, #777 2px 3px, #444 3px 5px, #5a5a5a 5px); }
.tools { display: flex; flex-direction: column; width: 18px; background: #eeeef0; border-right: 1px solid #333; border-bottom: 1px solid #333; }
.tools button { height: 17px; }
.spread { height: 326px; justify-content: space-between; }
.right { margin-left: 4px; width: 22px; }
.right .tools:first-of-type { padding-bottom: 1px; }
.view { flex: 1; min-width: 0; display: grid; grid-template-columns: 1fr 14px; grid-template-rows: 1fr 13px; margin: 1px 0 4px 2px; border-left: 2px solid #85857e; border-top: 1px solid #444; }
.canvas { width: 100%; height: 100%; min-height: 0; background: #000; display: block; }
.measure { fill: #c80c0c; font: 13px "Liberation Sans", sans-serif; }
.vscroll { display: flex; flex-direction: column; background: #f7f6f1; }
.vscroll span, .hscroll span { flex: 1; }
.vscroll button, .hscroll button { width: 12px; height: 12px; margin: 0 1px; background: #c3d5fb; border-radius: 2px; }
.vscroll svg, .hscroll svg { width: 12px; height: 12px; fill: none; stroke: #31456b; stroke-width: 2; }
.thumb { width: 10px; height: 11px; margin: 1px; border: 1px solid #a9c0f5; background: #c8d8fc; border-radius: 2px; }
.tabs { display: flex; align-items: center; background: #ece9d8; color: #222; }
.corner { background: #ece9d8; }
.nav { display: flex; width: 46px; }
.nav button { flex: 1; height: 11px; border-right: 1px solid #c8c5b4; }
.nav svg { width: 9px; height: 9px; fill: #aaa; stroke: #aaa; }
.tab { width: 30px; height: 13px; font-size: 10px; }
.tab.on { background: #000; color: #fff; clip-path: polygon(0 0, 100% 0, 88% 100%, 14% 100%); width: 34px; }
.slash { width: 6px; height: 13px; fill: none; stroke: #777; }
.hscroll { display: flex; width: 316px; margin-left: auto; background: #f7f6f1; border-left: 1px solid #ccc; }

.command { display: flex; flex-direction: column; height: 46px; box-sizing: border-box; flex: none; margin-left: 12px; padding-left: 2px; background: #fff; border-top-left-radius: 3px; color: #111; }
.log { height: 31px; border-bottom: 1px solid #bbb; font: 12px/13px "Liberation Mono", "Noto Sans CJK SC", monospace; white-space: pre; }
.log p { height: 13px; }
.log span { font-size: 10px; line-height: 10px; }
.command input { flex: 1; }
.status { height: 17px; flex: none; padding-left: 5px; line-height: 16px; font-size: 9px; color: #111; background: linear-gradient(#989898, #7c7c7c); border-top: 1px solid #555; box-sizing: border-box; }

.taskbar { display: flex; height: 23px; flex: none; background: linear-gradient(#4c8df5, #245edb 20%, #2258d2 85%, #1941a5); color: #fff; }
.start { width: 75px; gap: 5px; background: linear-gradient(#6cb86a, #3a9838 25%, #36902f 80%, #256f23); border-radius: 0 8px 8px 0; font: italic 14px/20px "Noto Sans CJK SC", sans-serif; }
.start svg { width: 15px; height: 15px; }
.launch { display: flex; align-items: center; gap: 3px; width: 80px; padding-left: 9px; box-sizing: border-box; flex: none; }
.launch span { margin: -8px 0 0 6px; }
.tasks { flex: 1; display: grid; grid-template-columns: repeat(6, 1fr); gap: 2px; padding: 2px 0 1px; }
.tasks button { justify-content: flex-start; gap: 3px; padding-left: 6px; min-width: 0; overflow: hidden; white-space: nowrap; background: linear-gradient(#5b98fa, #3a7cf0 20%, #3675ea); border-radius: 2px; }
.tasks button.on { background: #1a4bb4; }
.lang { width: 28px; }
.tray { display: flex; align-items: center; width: 110px; padding-left: 6px; background: linear-gradient(#3fb5f4, #129aea 20%, #1190e3 85%, #0c6cb8); flex: none; }
.tray .ic { width: 14px; height: 14px; }
.tray time { margin-left: 5px; font-size: 11px; }

.blob { position: absolute; right: 0; bottom: 24px; }
.ime { position: absolute; right: 22px; top: 391px; display: flex; align-items: center; height: 18px; background: #fff; border-radius: 2px; }
.imelogo { width: 22px; height: 22px; }
.ime button { width: 17px; height: 17px; }
.ime .ic { width: 13px; height: 13px; }
.en { color: #1f77c8; font: bold 12px "Noto Sans CJK SC", sans-serif; }
</style>
